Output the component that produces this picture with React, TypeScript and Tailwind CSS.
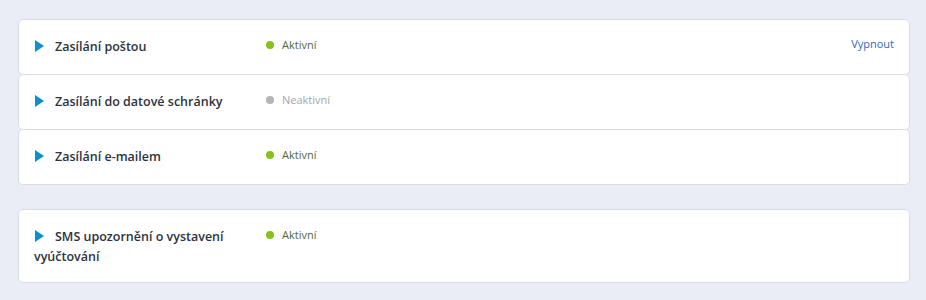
const rows = [
  { title: 'Zasílání poštou', active: true, action: 'Vypnout' },
  { title: 'Zasílání do datové schránky', active: false },
  { title: 'Zasílání e-mailem', active: true },
];

type Row = { title: string; active: boolean; action?: string };

const Caret = () => (
  <svg
    className="inline-block align-[-1px] ml-px mr-[11px]"
    width="9"
    height="12"
    viewBox="0 0 9 12">
    <path d="M0 0 L9 6 L0 12 Z" fill="#0b8ed2" />
  </svg>
);

const StatusRow = ({ row, className = '' }: { row: Row; className?: string }) => (
  <div
    className={`flex items-start bg-white border border-[#d8dce4] rounded-[5px] min-h-[56px] pl-[15px] pr-[15px] pt-4 pb-[15px] ${className}`}>
    <div className="w-[232px] shrink-0 text-[12.5px] leading-5 font-semibold text-[#2e333d] pt-px">
      <Caret />
      {row.title}
    </div>
    <div className="flex items-center gap-2 text-[11px] leading-4 pt-px">
      <span
        className={`w-2 h-2 rounded-full ${row.active ? 'bg-[#84c21c]' : 'bg-[#b3b5b8]'}`}
      />
      <span className={row.active ? 'text-[#56663f]' : 'text-[#a3a6ad]'}>
        {row.active ? 'Aktivní' : 'Neaktivní'}
      </span>
    </div>
    {row.action && (
      <a className="ml-auto text-[11px] leading-4 text-[#2f6bb3] cursor-pointer">
        {row.action}
      </a>
    )}
  </div>
);

export default function App() {
  return (
    <div
      className="min-h-[300px] bg-[#eaedf5] pl-[18px] pr-4 pt-[19px]"
      style={{ fontFamily: '"Open Sans", "Noto Sans", sans-serif' }}>
      <div className="flex flex-col">
        {rows.map((row, i) => (
          <StatusRow key={row.title} row={row} className={i > 0 ? '-mt-px' : ''} />
        ))}
      </div>
      <StatusRow
        className="mt-6"
        row={{ title: 'SMS upozornění o vystavení vyúčtování', active: true }}
      />
    </div>
  );
}
